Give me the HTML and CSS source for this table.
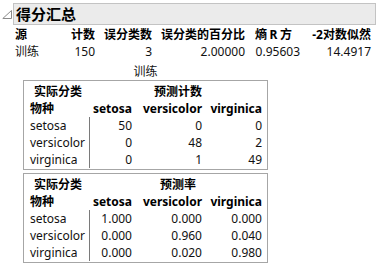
FILE: index.html
```html
<!DOCTYPE html>
<html lang="zh">
<head>
<meta charset="utf-8">
<link rel="stylesheet" href="styles.css">
</head>
<body>
<div class="report">
  <div class="outline-head">
    <svg class="disclosure" width="10" height="10" viewBox="0 0 10 10">
      <polygon points="9.5,0.5 9.5,8.5 0.8,8.5" fill="none" stroke="#8a8a8a" stroke-width="1"/>
    </svg>
    <div class="title-box">得分汇总</div>
  </div>

  <div class="summary">
    <div class="h left">源</div>
    <div class="h">计数</div>
    <div class="h">误分类数</div>
    <div class="h">误分类的百分比</div>
    <div class="h rsq">熵 R 方</div>
    <div class="h">-2对数似然</div>
    <div class="left">训练</div>
    <div>150</div>
    <div>3</div>
    <div>2.00000</div>
    <div>0.95603</div>
    <div>14.4917</div>
  </div>

  <div class="sub">
    <div class="caption">训练</div>

    <div class="ctable">
      <div class="b actual">实际分类</div>
      <div class="b group">预测计数</div>
      <div class="b left">物种</div>
      <div class="b">setosa</div>
      <div class="b">versicolor</div>
      <div class="b">virginica</div>
      <div class="lbl">setosa</div><div class="num">50</div><div class="num">0</div><div class="num">0</div>
      <div class="lbl">versicolor</div><div class="num">0</div><div class="num">48</div><div class="num">2</div>
      <div class="lbl">virginica</div><div class="num">0</div><div class="num">1</div><div class="num">49</div>
    </div>

    <div class="ctable second">
      <div class="b actual">实际分类</div>
      <div class="b group">预测率</div>
      <div class="b left">物种</div>
      <div class="b">setosa</div>
      <div class="b">versicolor</div>
      <div class="b">virginica</div>
      <div class="lbl">setosa</div><div class="num">1.000</div><div class="num">0.000</div><div class="num">0.000</div>
      <div class="lbl">versicolor</div><div class="num">0.000</div><div class="num">0.960</div><div class="num">0.040</div>
      <div class="lbl">virginica</div><div class="num">0.000</div><div class="num">0.020</div><div class="num">0.980</div>
    </div>
  </div>
</div>
</body>
</html>
```

FILE: styles.css
```css
html, body {
  margin: 0;
  padding: 0;
  background: #ffffff;
}

body {
  font-family: "Noto Sans", "Noto Sans CJK SC", sans-serif;
  font-size: 12px;
  color: #111111;
}

.report {
  width: 382px;
  height: 271px;
  overflow: hidden;
}

.outline-head {
  display: flex;
  align-items: flex-start;
  padding: 3px 0 0 2px;
}

.disclosure {
  display: block;
  margin-top: 7px;
  margin-right: 1px;
  flex: none;
}

.title-box {
  box-sizing: border-box;
  width: 363px;
  height: 22px;
  background: #ebebeb;
  border: 1px solid #c3c3c3;
  font-family: "Noto Sans CJK SC", sans-serif;
  font-weight: bold;
  font-size: 15px;
  line-height: 19px;
  padding-left: 2px;
  color: #000;
}

.summary {
  display: grid;
  grid-template-columns: 40px 40px 57px 93px 55px 71px;
  grid-auto-rows: 17px;
  line-height: 17px;
  margin: 1px 0 0 15px;
  text-align: right;
  white-space: nowrap;
}

.summary .h {
  font-weight: bold;
  color: #000;
}

.summary .left {
  text-align: left;
}

.summary .rsq {
  padding-right: 8px;
  word-spacing: -0.5px;
}

.sub {
  margin-left: 23px;
  width: 245px;
}

.caption {
  margin-top: 3px;
  line-height: 17px;
  height: 17px;
  text-align: center;
}

.ctable {
  box-sizing: border-box;
  width: 245px;
  border: 1px solid #a6a6a6;
  padding: 2px 5px 1px 6px;
  display: grid;
  grid-template-columns: 60px 42px 70px 60px;
  grid-auto-rows: 17px;
  line-height: 17px;
  text-align: right;
  white-space: nowrap;
}

.ctable.second {
  margin-top: 3px;
}

.ctable .b {
  font-weight: bold;
  color: #000;
}

.ctable .actual {
  text-align: left;
  padding-left: 4px;
}

.ctable .group {
  grid-column: 2 / 5;
  text-align: center;
  padding-left: 4px;
}

.ctable .left {
  text-align: left;
}

.ctable .lbl {
  text-align: left;
  border-right: 1px solid #7a7a7a;
}
```
